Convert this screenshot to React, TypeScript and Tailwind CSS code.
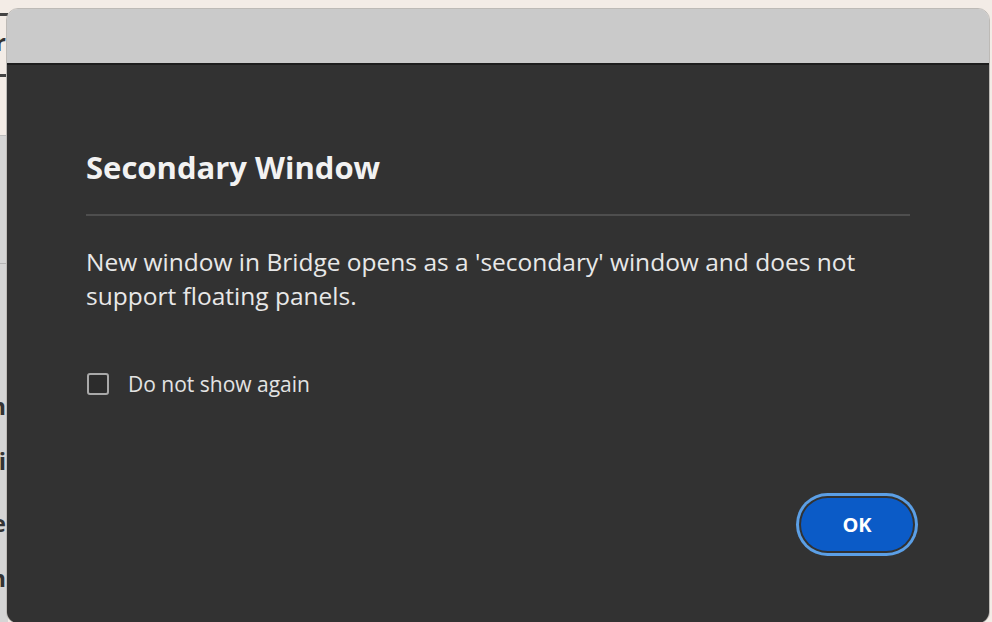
import { useState } from 'react';

// lines of the app behind the dialog; only their last letter peeks out
const BEHIND = [
  { text: 'Filter', mt: 'mt-[28px]' },
  { text: 'Collection', mt: 'mt-[336px]' },
  { text: 'Publi', mt: 'mt-[27px]' },
  { text: 'Name', mt: 'mt-[34px]' },
  { text: 'Pattern', mt: 'mt-[27px]' },
];

export default function App() {
  const [dontShow, setDontShow] = useState(false);

  return (
    <div className="relative h-[622px] w-[992px] overflow-hidden bg-[#f3ece6] font-['Open_Sans',sans-serif]">
      {/* Background app peeking out on the left */}
      <div className="flex h-full w-[8px] flex-col">
        <div className="mt-[13px] h-[3px] w-full bg-[#444]" />
        <div className="mt-[58px] h-[3px] w-full bg-[#444]" />
        <div className="mt-[58px] flex flex-1 flex-col border-t border-[#bdbdbd] bg-[#d5d5d5]">
          <div className="mt-[127px] h-px w-full bg-[#b5b5b5]" />
        </div>
      </div>
      <div className="absolute left-[-194px] top-0 flex w-[200px] flex-col items-end text-[24px] font-bold leading-[28px] text-[#333]">
        {BEHIND.map((l) => (
          <span key={l.text} className={l.mt}>
            {l.text}
          </span>
        ))}
      </div>

      {/* Secondary window */}
      <div className="absolute left-[6px] top-[8px] flex h-[616px] w-[984px] flex-col overflow-hidden rounded-[12px] border border-[#bdbab6]">
        <div className="h-[56px] shrink-0 border-b-2 border-[#1d1d1d] bg-[#cacaca]" />
        <div className="flex flex-1 flex-col bg-[#323232] px-[79px]">
          <h1 className="mt-[82px] text-[31px] font-bold leading-[40px] text-[#f2f2f2]">
            Secondary Window
          </h1>
          <div className="mt-[27px] h-[2px] bg-[#4e4e4e]" />
          <p className="mt-[29px] text-[24.5px] leading-[34px] text-[#e8e8e8]">
            New window in Bridge opens as a 'secondary' window and does not
            <br />
            support floating panels.
          </p>
          <label className="mt-[57px] flex cursor-pointer items-center gap-[19px]">
            <span
              onClick={() => setDontShow(!dontShow)}
              className="ml-px flex h-[22px] w-[22px] items-center justify-center rounded-[3px] border-2 border-[#a9a9a9] bg-[#2c2c2c]"
            >
              {dontShow && <span className="h-[10px] w-[10px] bg-[#e8e8e8]" />}
            </span>
            <span className="text-[21px] leading-[28px] text-[#e3e3e3]">Do not show again</span>
          </label>
          <div className="flex flex-1 items-start justify-end">
            <button className="mr-[-3px] mt-[100px] h-[53px] w-[112px] rounded-full bg-[#0b5bc7] text-[20px] font-bold text-white ring-[3px] ring-[#5b9fe6] ring-offset-2 ring-offset-[#323232]">
              OK
            </button>
          </div>
        </div>
      </div>
    </div>
  );
}
